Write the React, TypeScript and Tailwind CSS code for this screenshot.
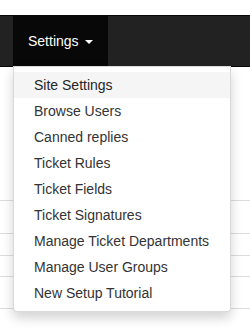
import { useState } from "react";

const items = [
  "Site Settings",
  "Browse Users",
  "Canned replies",
  "Ticket Rules",
  "Ticket Fields",
  "Ticket Signatures",
  "Manage Ticket Departments",
  "Manage User Groups",
  "New Setup Tutorial",
];

export default function App() {
  const [hover, setHover] = useState(0);

  return (
    <div className="w-[250px] h-[336px] bg-white overflow-hidden text-[14px] text-[#333] font-['Liberation_Sans',Arial,sans-serif]">
      <div className="h-[15px]" />
      <nav className="relative h-[52px] bg-[#222] border-y border-[#080808] flex">
        <div className="w-[13px]" />
        <div className="relative">
          <button className="h-[50px] px-[15px] bg-[#080808] text-white flex items-center gap-[6px] leading-[20px]">
            Settings
            <span className="w-0 h-0 border-x-[4px] border-x-transparent border-t-[4px] border-t-white mt-[2px]" />
          </button>
          <ul className="absolute z-10 top-[50px] left-0 w-[218px] py-[5px] bg-white border border-[rgba(0,0,0,0.15)] rounded-b-[4px] shadow-[0_6px_12px_rgba(0,0,0,0.175)]">
            {items.map((it, i) => (
              <li
                key={it}
                onMouseEnter={() => setHover(i)}
                className={`px-[20px] py-[3px] leading-[20px] whitespace-nowrap ${hover === i ? "bg-[#f5f5f5] text-[#262626]" : "text-[#333]"}`}
              >
                {it}
              </li>
            ))}
          </ul>
        </div>
      </nav>
      <div className="h-[133px]" />
      <div className="border-t border-[#ddd] h-[33px]" />
      <div className="border-t border-[#ddd] h-[22px]" />
      <div className="border-t border-[#ddd] h-[21px]" />
      <div className="border-t border-[#ddd] h-[32px]" />
      <div className="border-t border-[#ddd]" />
    </div>
  );
}
